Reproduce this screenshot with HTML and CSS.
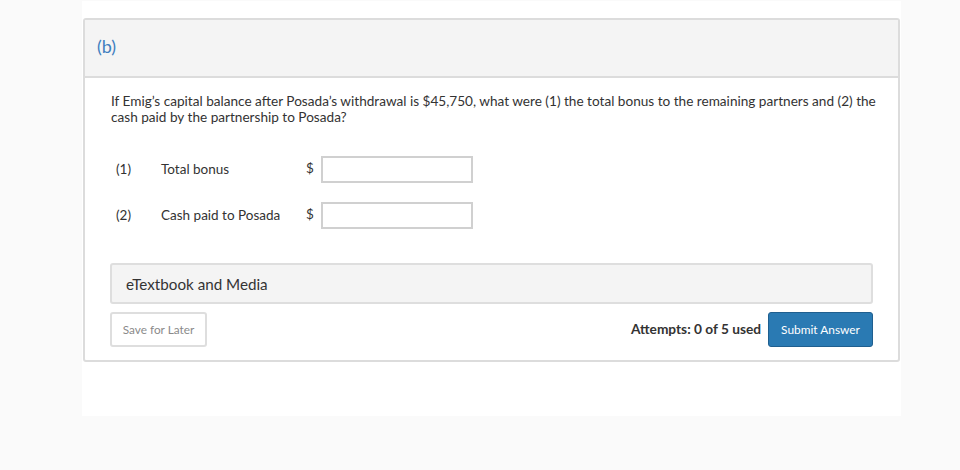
FILE: index.html
```html
<!DOCTYPE html>
<html>
<head>
<meta charset="utf-8">
<link rel="stylesheet" href="styles.css">
</head>
<body>
<div class="page">
  <div class="card">
    <div class="card-head">(b)</div>
    <div class="card-body">
      <p class="question">If Emig’s capital balance after Posada’s withdrawal is $45,750, what were (1) the total bonus to the remaining partners and (2) the cash paid by the partnership to Posada?</p>
      <div class="rows">
        <div class="row">
          <span class="num">(1)</span>
          <span class="label">Total bonus</span>
          <span class="cur">$</span>
          <input class="field" type="text">
        </div>
        <div class="row">
          <span class="num">(2)</span>
          <span class="label">Cash paid to Posada</span>
          <span class="cur">$</span>
          <input class="field" type="text">
        </div>
      </div>
      <div class="etext">eTextbook and Media</div>
      <div class="actions">
        <button class="btn-save">Save for Later</button>
        <div class="right">
          <span class="attempts">Attempts: 0 of 5 used</span>
          <button class="btn-submit">Submit Answer</button>
        </div>
      </div>
    </div>
  </div>
</div>
</body>
</html>
```
FILE: styles.css
```css
* { box-sizing: border-box; }
html, body { margin: 0; padding: 0; }
body {
  background: #fafafa;
  font-family: Lato, "Open Sans", sans-serif;
  color: #333;
  height: 470px;
}
.page {
  margin: 1px 0 0 82px;
  width: 819px;
  height: 415px;
  background: #fff;
  padding: 17px 0 0 1px;
}
.card {
  width: 817px;
  border: 2px solid #dcdcdc;
  border-radius: 3px;
  background: #fff;
}
.card-head {
  height: 58px;
  background: #f4f4f4;
  border-bottom: 2px solid #dcdcdc;
  padding: 15px 12px 0;
  font-size: 18px;
  line-height: 22px;
  color: #3f7fbf;
}
.card-body {
  padding: 15px 25px 13px;
}
.question {
  margin: 0 -6px 0 1px;
  font-size: 13.6px;
  line-height: 16px;
  color: #333;
}
.rows {
  padding-top: 31px;
  display: flex;
  flex-direction: column;
  gap: 19px;
}
.row {
  display: flex;
  align-items: center;
  height: 27px;
  font-size: 13.5px;
}
.num { width: 51px; padding-left: 6px; margin-top: -2px; }
.label { width: 145px; margin-top: -2px; }
.cur { width: 15px; margin-top: -3px; }
.field {
  width: 152px;
  height: 27px;
  border: 2px solid #d0d0d0;
  margin: 0;
  padding: 0 4px;
  background: #fff;
  outline: none;
}
.etext {
  margin-top: 34px;
  height: 41px;
  background: #f4f4f4;
  border: 2px solid #dedede;
  border-radius: 3px;
  padding: 0 14px;
  display: flex;
  align-items: center;
  font-size: 15.2px;
  color: #333;
}
.actions {
  margin-top: 8px;
  display: flex;
  justify-content: space-between;
  align-items: center;
}
.btn-save {
  width: 97px;
  height: 35px;
  background: #fff;
  border: 2px solid #dedede;
  border-radius: 3px;
  font-family: Lato, sans-serif;
  font-size: 11.8px;
  color: #8a8a8a;
  padding: 0;
}
.right { display: flex; align-items: center; gap: 7px; }
.attempts { font-size: 13.7px; font-weight: bold; color: #333; margin-top: -2px; }
.btn-submit {
  width: 105px;
  height: 35px;
  background: #2a7ab3;
  border: 1px solid #1f5f8f;
  border-radius: 3px;
  font-family: Lato, sans-serif;
  font-size: 11.9px;
  color: #fff;
  padding: 0;
}
```
